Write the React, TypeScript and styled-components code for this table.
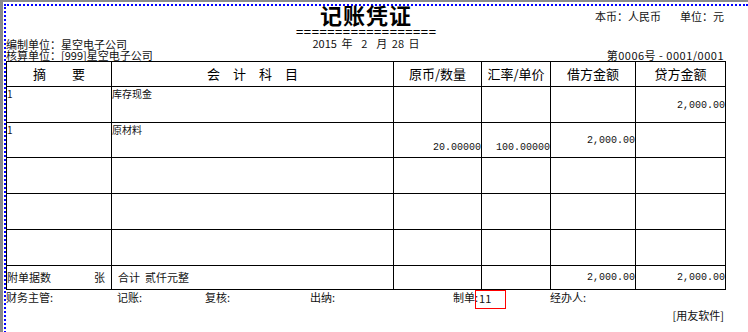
import styled, { createGlobalStyle } from 'styled-components'

const GlobalStyle = createGlobalStyle`
  html, body {
    margin: 0;
    padding: 0;
    background: #ffffff;
  }
  body {
    font-family: "Noto Sans CJK SC", "Noto Sans", sans-serif;
    color: #111111;
  }
`

const Frame = styled.div`
  width: 748px;
  height: 332px;
  box-sizing: border-box;
  border-left: 3px solid #8a8a8a;
  border-top: 2px solid #8a8a8a;
  overflow: hidden;
  background: #ffffff;
`

const Paper = styled.div`
  margin: 2px 0 0 1px;
  height: 330px;
  border-top: 2px dotted #0000ff;
  border-left: 2px dotted #0000ff;
`

const Sheet = styled.div`
  width: 720px;
`

const Header = styled.div`
  display: grid;
  grid-template-columns: 1fr auto 1fr;
  height: 55px;
`

const HeaderLeft = styled.div`
  display: flex;
  flex-direction: column;
  justify-content: flex-end;
  font-size: 11px;
  line-height: 11px;
  white-space: nowrap;
`

const HeaderCenter = styled.div`
  display: flex;
  flex-direction: column;
  align-items: center;
`

const Title = styled.h1`
  margin: -4px 0 0 0;
  font-size: 22px;
  line-height: 24px;
  height: 24px;
  font-weight: 700;
  letter-spacing: 1px;
  color: #000000;
`

const DoubleRule = styled.div`
  font-family: "Liberation Mono", monospace;
  font-size: 13px;
  line-height: 13px;
  color: #000000;
`

const DateLine = styled.div`
  margin-top: -2px;
  font-size: 11px;
  line-height: 12px;
  white-space: pre;
  word-spacing: 2px;
`

const HeaderRight = styled.div`
  display: flex;
  flex-direction: column;
  justify-content: space-between;
  align-items: flex-end;
  padding: 4px 2px 0 0;
  font-size: 11px;
  line-height: 12px;
  white-space: pre;
`

const Currency = styled.div`
  display: flex;
  gap: 19px;
`

const VoucherNo = styled.div`
  letter-spacing: 0.5px;
`

const Grid = styled.div`
  display: grid;
  grid-template-columns: 105px 282px 88px 69px 85px 90px;
  grid-template-rows: 25px 36px 35px 36px 36px 36px 24px;
  width: max-content;
  border-left: 1px solid #000000;
  border-top: 1px solid #000000;
`

type Align = 'top' | 'middle' | 'bottom'

const alignMap: Record<Align, string> = {
  top: 'flex-start',
  middle: 'center',
  bottom: 'flex-end',
}

const Cell = styled.div<{ $align?: Align; $right?: boolean }>`
  box-sizing: border-box;
  display: flex;
  align-items: ${(p) => alignMap[p.$align || 'top']};
  justify-content: ${(p) => (p.$right ? 'flex-end' : 'flex-start')};
  border-right: 1px solid #000000;
  border-bottom: 1px solid #000000;
  font-size: 10px;
  line-height: 11px;
  padding: ${(p) => (p.$align === 'bottom' ? '0 0 4px 0' : '1px 0 0 0')};
  white-space: pre;
  overflow: hidden;
`

const HeadCell = styled(Cell)`
  align-items: center;
  justify-content: center;
  padding: 0;
  font-size: 13px;
  line-height: 14px;
  color: #000000;
`

const Amount = styled.span`
  font-family: "Liberation Mono", monospace;
  font-size: 10px;
`

const FootCell = styled(Cell)`
  align-items: center;
  font-size: 11px;
  padding: 0;
`

const AttachCell = styled(FootCell)`
  justify-content: space-between;
  padding-right: 6px;
`

const TotalCell = styled(FootCell)`
  padding-left: 6px;
`

const SignRow = styled.div`
  display: grid;
  grid-template-columns: 111px 88px 105px 143px 97px 1fr;
  height: 19px;
  font-size: 11px;
  line-height: 14px;
  white-space: nowrap;
`

const SignItem = styled.div`
  display: flex;
  align-items: flex-start;
`

const MakerBox = styled.span`
  display: inline-block;
  box-sizing: border-box;
  width: 31px;
  height: 19px;
  margin-left: -3px;
  padding-left: 3px;
  border: 1px solid #ff0000;
  line-height: 14px;
`

const Brand = styled.div`
  text-align: right;
  padding-right: 2px;
  font-size: 11px;
  line-height: 12px;
`

type Row = {
  summary: string
  account: string
  qty: string
  price: string
  debit: string
  credit: string
}

const rows: Row[] = [
  { summary: '1', account: '库存现金', qty: '', price: '', debit: '', credit: '2,000.00' },
  { summary: '1', account: '原材料', qty: '20.00000', price: '100.00000', debit: '2,000.00', credit: '' },
  { summary: '', account: '', qty: '', price: '', debit: '', credit: '' },
  { summary: '', account: '', qty: '', price: '', debit: '', credit: '' },
  { summary: '', account: '', qty: '', price: '', debit: '', credit: '' },
]

const headings = ['摘　　要', '会　计　科　目', '原币/数量', '汇率/单价', '借方金额', '贷方金额']

export default function App() {
  return (
    <>
      <GlobalStyle />
      <Frame>
        <Paper>
          <Sheet>
            <Header>
              <HeaderLeft>
                <div>编制单位：星空电子公司</div>
                <div>核算单位：[999]星空电子公司</div>
              </HeaderLeft>
              <HeaderCenter>
                <Title>记账凭证</Title>
                <DoubleRule>==================</DoubleRule>
                <DateLine>2015 年  2  月 28 日</DateLine>
              </HeaderCenter>
              <HeaderRight>
                <Currency>
                  <span>本币：人民币</span>
                  <span>单位：元</span>
                </Currency>
                <VoucherNo>第0006号 - 0001/0001</VoucherNo>
              </HeaderRight>
            </Header>

            <Grid>
              {headings.map((h) => (
                <HeadCell key={h}>{h}</HeadCell>
              ))}
              {rows.map((r, i) => [
                <Cell key={`s${i}`}>{r.summary}</Cell>,
                <Cell key={`a${i}`}>{r.account}</Cell>,
                <Cell key={`q${i}`} $align="bottom" $right>
                  <Amount>{r.qty}</Amount>
                </Cell>,
                <Cell key={`p${i}`} $align="bottom" $right>
                  <Amount>{r.price}</Amount>
                </Cell>,
                <Cell key={`d${i}`} $align="middle" $right>
                  <Amount>{r.debit}</Amount>
                </Cell>,
                <Cell key={`c${i}`} $align="middle" $right>
                  <Amount>{r.credit}</Amount>
                </Cell>,
              ])}
              <AttachCell>
                <span>附单据数</span>
                <span>张</span>
              </AttachCell>
              <TotalCell>合计  贰仟元整</TotalCell>
              <FootCell />
              <FootCell />
              <FootCell $right>
                <Amount>2,000.00</Amount>
              </FootCell>
              <FootCell $right>
                <Amount>2,000.00</Amount>
              </FootCell>
            </Grid>

            <SignRow>
              <SignItem>财务主管:</SignItem>
              <SignItem>记账:</SignItem>
              <SignItem>复核:</SignItem>
              <SignItem>出纳:</SignItem>
              <SignItem>
                <span>制单:</span>
                <MakerBox>11</MakerBox>
              </SignItem>
              <SignItem>经办人:</SignItem>
            </SignRow>
            <Brand>[用友软件]</Brand>
          </Sheet>
        </Paper>
      </Frame>
    </>
  )
}
